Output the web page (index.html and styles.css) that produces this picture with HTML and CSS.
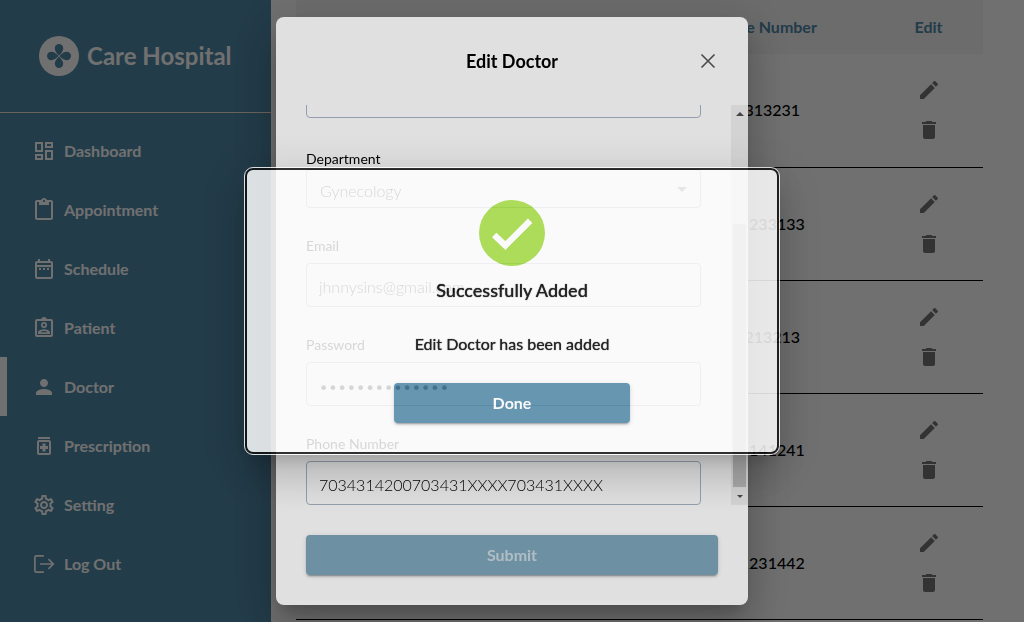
FILE: index.html
```html
<!DOCTYPE html>
<html lang="en">
<head>
<meta charset="utf-8">
<title>Care Hospital</title>
<meta name="viewport" content="width=device-width, initial-scale=1">
<link rel="stylesheet" href="styles.css">
</head>
<body>
<svg class="sprite" aria-hidden="true">
  <symbol id="pen" viewBox="0 0 24 24"><path d="M3 17.25V21h3.75L17.81 9.94l-3.75-3.75L3 17.25zM20.71 7.04c.39-.39.39-1.02 0-1.41l-2.34-2.34a.9959.9959 0 0 0-1.41 0l-1.83 1.83 3.75 3.75 1.83-1.83z"/></symbol>
  <symbol id="bin" viewBox="0 0 24 24"><path d="M6 19c0 1.1.9 2 2 2h8c1.1 0 2-.9 2-2V7H6v12zM19 4h-3.5l-1-1h-5l-1 1H5v2h14V4z"/></symbol>
</svg>
<div class="app">
  <aside class="sidebar">
    <div class="brand">
      <svg class="brand-logo" viewBox="0 0 40 40" aria-hidden="true">
        <circle cx="20" cy="20" r="20" fill="#fff"/>
        <g fill="#4f88a8">
          <path id="petal" d="M20 19.6C17.8 17.4 15.8 15 15.8 12.2a4.2 4.2 0 0 1 8.4 0C24.200 15 22.200 17.400 20 19.600z"/>
          <use href="#petal" transform="rotate(90 20 20)"/>
          <use href="#petal" transform="rotate(180 20 20)"/>
          <use href="#petal" transform="rotate(270 20 20)"/>
        </g>
      </svg>
      <span class="brand-name">Care Hospital</span>
    </div>
    <nav class="menu">
      <a class="menu-item" href="#dashboard">
        <svg viewBox="0 0 24 24"><path d="M19 5v2h-4V5h4M9 5v6H5V5h4m10 8v6h-4v-6h4M9 17v2H5v-2h4M21 3h-8v6h8V3zM11 3H3v10h8V3zm10 8h-8v10h8V11zm-10 4H3v6h8v-6z"/></svg>Dashboard</a>
      <a class="menu-item" href="#appointment">
        <svg viewBox="0 0 24 24"><path d="M19 2h-4.180C14.400.840 13.300 0 12 0S9.600.840 9.180 2H5c-1.100 0-2 .900-2 2v16c0 1.100.900 2 2 2h14c1.100 0 2-.900 2-2V4c0-1.100-.900-2-2-2zm-7 0c.550 0 1 .450 1 1s-.450 1-1 1-1-.450-1-1 .450-1 1-1zm7 18H5V4h2v3h10V4h2v16z"/></svg>Appointment</a>
      <a class="menu-item" href="#schedule">
        <svg viewBox="0 0 24 24"><path d="M19 4h-1V2h-2v2H8V2H6v2H5a2 2 0 0 0-2 2v14a2 2 0 0 0 2 2h14a2 2 0 0 0 2-2V6a2 2 0 0 0-2-2zm0 16H5V10h14v10zm0-12H5V6h14v2zM7 11h2v2H7zm4 0h2v2h-2zm4 0h2v2h-2z"/></svg>Schedule</a>
      <a class="menu-item" href="#patient">
        <svg viewBox="0 0 24 24"><path d="M19 3h-4.180C14.400 1.840 13.300 1 12 1s-2.400.840-2.820 2H5a2 2 0 0 0-2 2v14a2 2 0 0 0 2 2h14a2 2 0 0 0 2-2V5a2 2 0 0 0-2-2zm0 16H5V5h14v14zM12 12a3 3 0 1 0 0-6 3 3 0 0 0 0 6zm0-4.300a1.300 1.300 0 1 1 0 2.600 1.300 1.300 0 0 1 0-2.600zM6 16.500V18h12v-1.500c0-2-4-3.200-6-3.200s-6 1.200-6 3.200zm2.500-.300c.700-.600 2.200-1.200 3.500-1.200s2.800.600 3.500 1.200z"/></svg>Patient</a>
      <a class="menu-item active" href="#doctor">
        <svg viewBox="0 0 24 24"><path d="M12 12c2.210 0 4-1.790 4-4s-1.790-4-4-4-4 1.790-4 4 1.790 4 4 4zm0 2c-2.670 0-8 1.340-8 4v2h16v-2c0-2.660-5.330-4-8-4z"/></svg>Doctor</a>
      <a class="menu-item" href="#prescription">
        <svg viewBox="0 0 24 24"><path d="M6 3h12v2H6zM17 6H7a2 2 0 0 0-2 2v11a2 2 0 0 0 2 2h10a2 2 0 0 0 2-2V8a2 2 0 0 0-2-2zm0 13H7V8h10v11zM10.500 9.500h3V12H16v3h-2.500v2.500h-3V15H8v-3h2.500z"/></svg>Prescription</a>
      <a class="menu-item" href="#setting">
        <svg viewBox="0 0 24 24"><path d="M19.430 12.980c.040-.320.070-.640.070-.980s-.030-.660-.070-.980l2.110-1.650c.190-.150.240-.420.120-.640l-2-3.460c-.090-.160-.260-.250-.440-.250-.060 0-.120.010-.170.030l-2.490 1c-.520-.400-1.080-.730-1.690-.980l-.380-2.650C14.460 2.180 14.250 2 14 2h-4c-.250 0-.460.180-.490.420l-.380 2.650c-.610.250-1.170.590-1.690.980l-2.490-1c-.060-.020-.120-.030-.180-.030-.170 0-.340.090-.430.250l-2 3.460c-.130.220-.070.490.120.640l2.110 1.650c-.040.320-.070.650-.070.980s.030.660.070.980l-2.110 1.650c-.190.150-.240.420-.120.640l2 3.460c.090.160.260.250.440.250.060 0 .120-.010.170-.030l2.490-1c.520.400 1.080.730 1.690.980l.380 2.650c.030.240.240.420.490.420h4c.250 0 .460-.180.490-.420l.380-2.650c.610-.250 1.170-.590 1.690-.980l2.490 1c.060.020.120.030.180.030.170 0 .340-.090.430-.250l2-3.460c.120-.220.070-.490-.120-.640l-2.110-1.650zm-1.980-1.710c.040.310.050.520.050.730s-.020.430-.050.730l-.140 1.130.890.700 1.080.840-.700 1.210-1.270-.510-1.040-.420-.900.680c-.430.320-.840.560-1.250.730l-1.060.430-.160 1.130-.200 1.350h-1.400l-.190-1.350-.160-1.130-1.060-.430c-.430-.180-.830-.410-1.230-.710l-.910-.700-1.060.430-1.270.510-.700-1.210 1.080-.840.890-.700-.140-1.130c-.030-.310-.050-.540-.050-.740s.020-.430.050-.730l.140-1.130-.890-.700-1.080-.840.700-1.210 1.270.510 1.040.420.900-.680c.430-.320.840-.560 1.250-.730l1.060-.430.160-1.130.200-1.350h1.390l.190 1.350.160 1.130 1.060.430c.430.180.830.410 1.230.710l.910.700 1.060-.430 1.270-.510.700 1.210-1.070.850-.890.700.140 1.130zM12 8c-2.210 0-4 1.790-4 4s1.790 4 4 4 4-1.790 4-4-1.790-4-4-4zm0 6c-1.100 0-2-.900-2-2s.900-2 2-2 2 .900 2 2-.900 2-2 2z"/></svg>Setting</a>
      <a class="menu-item" href="#logout">
        <svg viewBox="0 0 24 24"><g fill="none" stroke="#fff" stroke-width="1.700"><path d="M11.800 3.800H4.400a1.500 1.500 0 0 0-1.500 1.500v13.400a1.500 1.500 0 0 0 1.500 1.500h7.400M8 12h13M16.500 7.200l4.800 4.800-4.800 4.800"/></g></svg>Log Out</a>
    </nav>
  </aside>
  <main class="content">
    <table class="doctors">
      <thead><tr><th class="col-info"></th><th class="col-phone">Phone Number</th><th class="col-edit">Edit</th></tr></thead>
      <tbody>
        <tr><td></td><td>70313231</td><td><div class="actions"><button aria-label="Edit"><svg><use href="#pen"/></svg></button><button aria-label="Delete"><svg><use href="#bin"/></svg></button></div></td></tr>
        <tr><td></td><td>703233133</td><td><div class="actions"><button aria-label="Edit"><svg><use href="#pen"/></svg></button><button aria-label="Delete"><svg><use href="#bin"/></svg></button></div></td></tr>
        <tr><td></td><td>70213213</td><td><div class="actions"><button aria-label="Edit"><svg><use href="#pen"/></svg></button><button aria-label="Delete"><svg><use href="#bin"/></svg></button></div></td></tr>
        <tr><td></td><td>703141241</td><td><div class="actions"><button aria-label="Edit"><svg><use href="#pen"/></svg></button><button aria-label="Delete"><svg><use href="#bin"/></svg></button></div></td></tr>
        <tr><td></td><td>701231442</td><td><div class="actions"><button aria-label="Edit"><svg><use href="#pen"/></svg></button><button aria-label="Delete"><svg><use href="#bin"/></svg></button></div></td></tr>
      </tbody>
    </table>
  </main>
</div>

<div class="overlay overlay-form">
  <form class="dialog form-dialog" role="dialog" aria-labelledby="form-title">
    <header class="form-head">
      <h2 id="form-title">Edit Doctor</h2>
      <button class="close" type="button" aria-label="Close"><svg viewBox="0 0 20 20"><path d="M3.500 3.500l13 13M16.500 3.500l-13 13"/></svg></button>
    </header>
    <div class="scroller">
      <div class="fields">
        <input class="box" type="text" aria-label="Name">
        <div class="field field-select">
          <label for="department">Department</label>
          <div class="select-wrap">
            <select class="box" id="department"><option>Gynecology</option></select>
            <svg viewBox="0 0 24 24" aria-hidden="true"><path d="M7 10l5 5 5-5z"/></svg>
          </div>
        </div>
        <div class="field">
          <label for="email">Email</label>
          <input class="box" id="email" type="text" value="jhnnysins@gmail.com">
        </div>
        <div class="field">
          <label for="password">Password</label>
          <input class="box" id="password" type="password" value="12345678901234">
        </div>
        <div class="field">
          <label for="phone">Phone Number</label>
          <input class="box" id="phone" type="text" value="7034314200703431XXXX703431XXXX">
        </div>
      </div>
      <div class="scrollbar" aria-hidden="true">
        <span class="arrow up"></span>
        <span class="thumb"></span>
        <span class="arrow down"></span>
      </div>
    </div>
    <button class="button submit" type="button">Submit</button>
  </form>
</div>

<div class="overlay overlay-notice">
  <section class="dialog notice" role="dialog" aria-labelledby="notice-title">
    <svg class="tick" viewBox="2 2 20 20" aria-hidden="true"><circle cx="12" cy="12" r="10"/><path d="M6.600 12.600l3.400 3.200 7.500-7.500"/></svg>
    <h2 id="notice-title">Successfully Added</h2>
    <p>Edit Doctor has been added</p>
    <button class="button done" type="button">Done</button>
  </section>
</div>
</body>
</html>
```
FILE: styles.css
```css
* { box-sizing: border-box; }
body {
  margin: 0;
  height: 100vh;
  overflow: hidden;
  background: #fff;
  color: #000;
  font: 400 16px/24px Lato, "Open Sans", sans-serif;
}
button { font: inherit; border: 0; padding: 0; background: none; cursor: pointer; }
h2, p { margin: 0; }
.sprite { display: none; }

.app { display: flex; height: 100vh; }
.sidebar { flex: none; width: 271px; background: #4f88a8; color: #fff; }
.brand {
  display: flex;
  align-items: center;
  gap: 8px;
  height: 113px;
  padding-left: 39px;
  border-bottom: 1px solid #f4e3d0;
}
.brand-logo { width: 40px; height: 40px; }
.brand-name { font-size: 24px; font-weight: 700; line-height: 32px; }
.menu { display: flex; flex-direction: column; padding-top: 8px; }
.menu-item {
  display: flex;
  align-items: center;
  gap: 8px;
  height: 59px;
  padding-left: 25px;
  border-left: 7px solid transparent;
  color: #fff;
  font-size: 16px;
  font-weight: 700;
  text-decoration: none;
}
.menu-item.active { border-left-color: #fff; }
.menu-item svg { width: 24px; height: 24px; fill: #fff; }

.content { flex: 1; padding: 0 41px 0 25px; }
.doctors { width: 100%; border-collapse: collapse; table-layout: fixed; text-align: center; }
.doctors th { height: 54px; padding: 0; background: #f5f5f5; color: #4f88a8; font-size: 16px; font-weight: 700; }
.doctors td { height: 113px; padding: 0; border-bottom: 1px solid #000; font-size: 16px; font-weight: 500; }
.col-phone { width: 222px; }
.col-edit { width: 109px; }
.actions { display: flex; flex-direction: column; align-items: center; gap: 16px; }
.actions button, .actions svg { display: block; width: 24px; height: 24px; }
.actions svg { fill: #757575; }

.overlay {
  position: fixed;
  inset: 0;
  display: flex;
  align-items: center;
  justify-content: center;
}
.overlay-form { background: rgba(0, 0, 0, 0.5); }
.overlay-notice { background: rgba(0, 0, 0, 0.12); }
.dialog {
  background: #fff;
  border-radius: 8px;
  box-shadow: 0 11px 15px -7px rgba(0, 0, 0, 0.2), 0 24px 38px 3px rgba(0, 0, 0, 0.14), 0 9px 46px 8px rgba(0, 0, 0, 0.12);
}
.button {
  display: block;
  height: 40px;
  border-radius: 4px;
  color: #fff;
  font-size: 16px;
  font-weight: 700;
  box-shadow: 0 3px 1px -2px rgba(0, 0, 0, 0.2), 0 2px 2px 0 rgba(0, 0, 0, 0.14), 0 1px 5px 0 rgba(0, 0, 0, 0.12);
}

.form-dialog { width: 472px; padding: 30px; }
.form-head { display: grid; grid-template-columns: 20px 1fr 20px; align-items: center; height: 28px; margin-bottom: 30px; }
.form-head h2 { grid-column: 2; text-align: center; font-size: 18px; font-weight: 700; }
.close, .close svg { display: block; width: 20px; height: 20px; }
.close svg { fill: none; stroke: #555; stroke-width: 1.6; }
.scroller { display: flex; justify-content: space-between; height: 400px; margin: 0 -30px 30px 0; overflow: hidden; }
.fields { display: flex; flex-direction: column; justify-content: flex-end; gap: 26px; width: 395px; }
.field { display: flex; flex-direction: column; gap: 5px; }
.field-select { gap: 0; padding-top: 4px; }
.field label { font-size: 14px; }
.field-select label { line-height: 21px; }
.box {
  flex: none;
  display: block;
  width: 100%;
  height: 44px;
  padding: 2px 12px 0;
  border: 1px solid #a9b6c6;
  border-radius: 4px;
  background: transparent;
  color: #000;
  font: 300 16px/24px Lato, "Open Sans", sans-serif;
}
.select-wrap { display: grid; align-items: center; }
.select-wrap > * { grid-area: 1 / 1; }
.select-wrap .box { height: 39px; padding: 4px 13px 0; appearance: none; }
.select-wrap svg { justify-self: end; width: 24px; height: 24px; margin-right: 7px; fill: #757575; }

.scrollbar { display: flex; flex-direction: column; align-items: center; width: 17px; background: #f1f1f1; }
.arrow { flex: none; display: grid; place-items: center; width: 17px; height: 17px; }
.arrow::before { content: ""; border: 4px solid transparent; }
.up::before { border-top: 0; border-bottom-color: #505050; }
.down::before { border-width: 3px; border-bottom: 0; border-top-color: #505050; }
.thumb { width: 13px; height: 263px; margin: auto 0 1px; background: #c1c1c1; }
.submit { width: 100%; background: #7da5b9; color: #c8d8e1; }

.notice {
  display: flex;
  flex-direction: column;
  align-items: center;
  width: 534px;
  padding: 30px 30px 29px;
  border: 2px solid #101010;
  outline: 1px solid #fff;
  opacity: 0.84;
}
.tick { width: 66px; height: 66px; margin-bottom: 12px; fill: #a4db41; }
.tick path { fill: none; stroke: #fff; stroke-width: 1.9; }
.notice h2 { margin-bottom: 30px; font-size: 18px; font-weight: 500; text-shadow: 0 0 1px #000; }
.notice p { margin-bottom: 27px; text-shadow: 0 0 1px #000; }
.done { width: 236px; background: #4f88a8; }
```
